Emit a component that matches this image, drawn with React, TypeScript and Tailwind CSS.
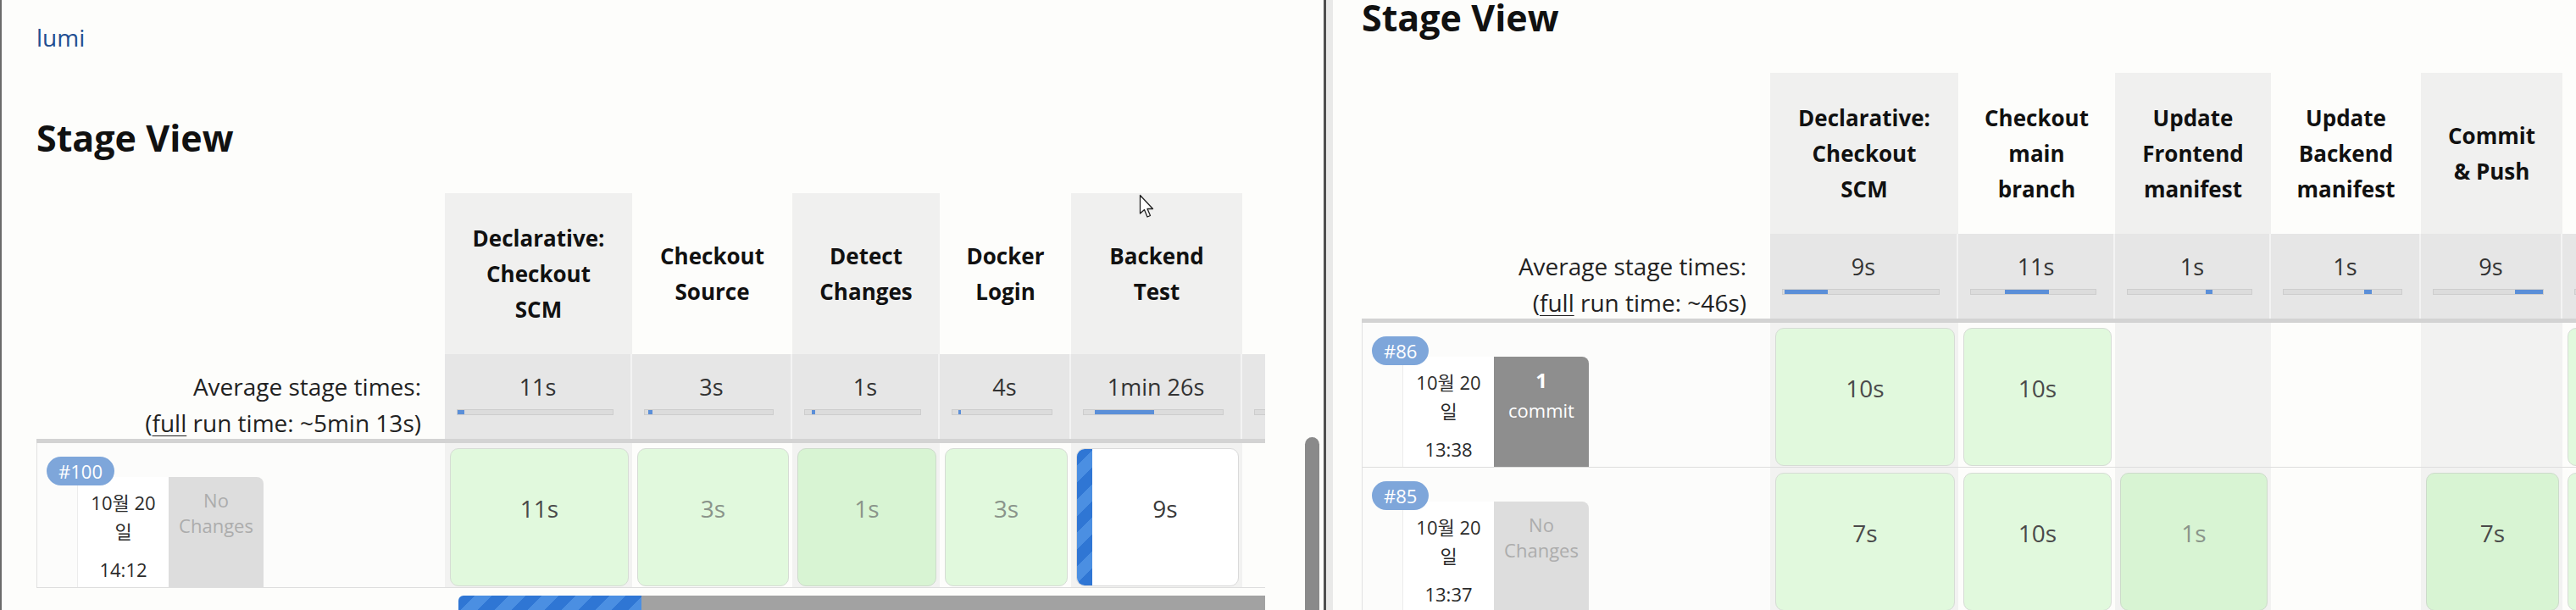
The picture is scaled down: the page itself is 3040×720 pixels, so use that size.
import clsx from "clsx";

type Stage = { lines: string[]; w: string; avg: string; fill?: [number, number] };
type Cell =
  | { kind: "ok"; t: string; dark?: boolean; dim?: boolean }
  | { kind: "run"; t: string }
  | null;
type Build = { id: string; time: string; commits: number; cells: Cell[] };

const leftStages: Stage[] = [
  { lines: ["Declarative:", "Checkout", "SCM"], w: "w-[221px]", avg: "11s", fill: [0, 8] },
  { lines: ["Checkout", "Source"], w: "w-[189px]", avg: "3s", fill: [4, 5] },
  { lines: ["Detect", "Changes"], w: "w-[174px]", avg: "1s", fill: [8, 4] },
  { lines: ["Docker", "Login"], w: "w-[155px]", avg: "4s", fill: [7, 3] },
  { lines: ["Backend", "Test"], w: "w-[202px]", avg: "1min 26s", fill: [13, 70] },
  { lines: [], w: "w-[200px]", avg: "" },
];

const rightStages: Stage[] = [
  { lines: ["Declarative:", "Checkout", "SCM"], w: "w-[222px]", avg: "9s", fill: [2, 51] },
  { lines: ["Checkout", "main", "branch"], w: "w-[185px]", avg: "11s", fill: [40, 52] },
  { lines: ["Update", "Frontend", "manifest"], w: "w-[184px]", avg: "1s", fill: [92, 8] },
  { lines: ["Update", "Backend", "manifest"], w: "w-[177px]", avg: "1s", fill: [95, 9] },
  { lines: ["Commit", "& Push"], w: "w-[167px]", avg: "9s", fill: [96, 38] },
  { lines: [], w: "w-[180px]", avg: "" },
];

const leftBuilds: Build[] = [
  {
    id: "100",
    time: "14:12",
    commits: 0,
    cells: [
      { kind: "ok", t: "11s" },
      { kind: "ok", t: "3s", dim: true },
      { kind: "ok", t: "1s", dim: true, dark: true },
      { kind: "ok", t: "3s", dim: true },
      { kind: "run", t: "9s" },
      null,
    ],
  },
];

const rightBuilds: Build[] = [
  {
    id: "86",
    time: "13:38",
    commits: 1,
    cells: [{ kind: "ok", t: "10s" }, { kind: "ok", t: "10s" }, null, null, null, { kind: "ok", t: "" }],
  },
  {
    id: "85",
    time: "13:37",
    commits: 0,
    cells: [
      { kind: "ok", t: "7s" },
      { kind: "ok", t: "10s" },
      { kind: "ok", t: "1s", dim: true, dark: true },
      null,
      { kind: "ok", t: "7s", dark: true },
      { kind: "ok", t: "" },
    ],
  },
];

const stripes =
  "bg-[repeating-linear-gradient(135deg,#2f76d4_0_14px,#4b8fe2_14px_28px)]";

function StageCell({ cell }: { cell: Cell }) {
  if (!cell) return null;
  if (cell.kind === "run") {
    return (
      <div className="flex h-full overflow-hidden rounded-[10px] border border-[#dadada] bg-white">
        <div className={clsx("w-[18px] shrink-0", stripes)} />
        <div className="flex flex-1 items-center justify-center pb-[22px] text-[28px] text-[#3a3a3a]">
          {cell.t}
        </div>
      </div>
    );
  }
  return (
    <div
      className={clsx(
        "flex h-full items-center justify-center rounded-[10px] border pb-[22px] text-[28px]",
        cell.dark ? "border-[#cddbcb] bg-[#d8f4d3]" : "border-[#d6dcd5] bg-[#e1f9dd]",
        cell.dim ? "text-[#8a948a]" : "text-[#4a4a4a]"
      )}
    >
      {cell.t}
    </div>
  );
}

function BuildRow({ b, stages }: { b: Build; stages: Stage[] }) {
  return (
    <div className="flex h-[171px] border-b border-[#dedede]">
      <div className="w-[482px] shrink-0 border-l border-[#e2e2e2] bg-[#fcfcfb] pl-[11px] pt-[16px]">
        <div className="relative z-10 flex h-[34px]">
          <span className="rounded-full bg-[#7ea6da] px-[14px] text-[22px] leading-[34px] text-white">
            #{b.id}
          </span>
        </div>
        <div className="-mt-[10px] ml-[36px] flex h-[130px]">
          <div className="flex w-[108px] flex-col items-center border-l border-[#ececec] bg-white pb-[4px] pt-[13px] text-[22px] leading-[34px] text-[#2b2b2b]">
            <span>10월 20</span>
            <span>일</span>
            <span className="mt-auto">{b.time}</span>
          </div>
          {b.commits > 0 ? (
            <div className="flex w-[112px] flex-col items-center rounded-tr-[8px] bg-[#8e8e8e] pt-[11px] text-white">
              <span className="text-[24px] font-bold leading-[34px]">{b.commits}</span>
              <span className="text-[22px] leading-[36px]">commit</span>
            </div>
          ) : (
            <div className="flex w-[112px] flex-col items-center rounded-tr-[8px] bg-[#dddddd] pt-[12px] text-[22px] leading-[30px] text-[#acacac]">
              <span>No</span>
              <span>Changes</span>
            </div>
          )}
        </div>
      </div>
      {stages.map((s, i) => (
        <div
          key={i}
          className={clsx(s.w, "shrink-0 pb-[1px] pl-[6px] pr-[4px] pt-[6px]", i % 2 === 0 && "bg-[#f2f2f1]")}
        >
          <StageCell cell={b.cells[i]} />
        </div>
      ))}
    </div>
  );
}

function StageTable({
  stages,
  runTime,
  builds,
  tail,
}: {
  stages: Stage[];
  runTime: string;
  builds: Build[];
  tail?: boolean;
}) {
  return (
    <div className="mt-[37px]">
      {/* stage names */}
      <div className="flex h-[190px]">
        <div className="w-[482px] shrink-0" />
        {stages.map((s, i) => (
          <div
            key={i}
            className={clsx(
              s.w,
              "flex shrink-0 flex-col items-center justify-center text-center text-[26px] font-bold leading-[42px] text-[#111]",
              i % 2 === 0 && "bg-[#f0f0ef]"
            )}
          >
            {s.lines.map((l) => (
              <span key={l}>{l}</span>
            ))}
          </div>
        ))}
      </div>

      {/* averages */}
      <div className="flex h-[105px] border-b-[5px] border-[#d3d3d3]">
        <div className="w-[482px] shrink-0 pr-[28px] pt-[17px] text-right text-[28px] leading-[43px] text-[#222]">
          <div>Average stage times:</div>
          <div>
            (<span className="underline decoration-1 underline-offset-4">full</span> run time: {runTime})
          </div>
        </div>
        {stages.map((s, i) => (
          <div key={i} className={clsx(s.w, "shrink-0 border-r-2 border-[#f3f3f3] bg-[#e6e6e6] pt-[22px]")}>
            <div className="h-[34px] text-center text-[27px] leading-[34px] text-[#333]">{s.avg}</div>
            <div className="ml-[14px] mr-[20px] mt-[9px] flex h-[7px] border border-[#cdcdcd] bg-[#dcdcdc]">
              {s.fill && (
                <div className="h-full bg-[#5b8fd8]" style={{ marginLeft: s.fill[0], width: s.fill[1] }} />
              )}
            </div>
          </div>
        ))}
      </div>

      {builds.map((b) => (
        <BuildRow key={b.id} b={b} stages={stages} />
      ))}

      {tail && (
        <div className="mt-[9px] flex h-[20px]">
          <div className="w-[498px] shrink-0" />
          <div className={clsx("w-[216px] shrink-0 rounded-tl-[6px]", stripes)} />
          <div className="flex-1 bg-[#a2a2a2]" />
        </div>
      )}
    </div>
  );
}

function Cursor() {
  return (
    <svg className="absolute left-[1342px] top-[229px]" width="20" height="30" viewBox="0 0 20 30">
      <path
        d="M1.5 1.5 L1.5 23 L6.5 18.5 L10 27 L13.5 25.5 L10 17.5 L16.5 17.5 Z"
        fill="white"
        stroke="#222"
        strokeWidth="1.3"
        strokeLinejoin="round"
      />
    </svg>
  );
}

export default function App() {
  return (
    <div className="flex h-[720px] w-[3040px] overflow-hidden bg-[#fdfdfb] font-['Segoe_UI','Open_Sans','Noto_Sans_CJK_KR',sans-serif] text-[#222]">
      {/* left capture */}
      <div className="relative h-[720px] w-[1562px] shrink-0 overflow-hidden border-l-2 border-[#6b6b6b]">
        <div className="pl-[41px]">
          <div className="h-[64px] pt-[24px] text-[28px] leading-[40px] text-[#224e91]">lumi</div>
          <h2 className="mt-[71px] h-[56px] text-[43px] font-bold leading-[56px] text-[#111]">Stage View</h2>
          <div className="w-[1450px] overflow-hidden">
            <StageTable stages={leftStages} runTime="~5min 13s" builds={leftBuilds} tail />
          </div>
        </div>
        <div className="absolute right-[5px] top-[516px] h-[214px] w-[17px] rounded-full bg-[#8a8a8a]" />
        <Cursor />
      </div>

      <div className="w-[3px] shrink-0 bg-[#4f4f4f]" />

      {/* right capture */}
      <div className="relative h-[720px] flex-1 overflow-hidden border-l-[8px] border-[#e9e9e8]">
        <div className="pl-[34px]">
          <h2 className="-mt-[7px] h-[56px] text-[43px] font-bold leading-[56px] text-[#111]">Stage View</h2>
          <StageTable stages={rightStages} runTime="~46s" builds={rightBuilds} />
        </div>
      </div>
    </div>
  );
}
